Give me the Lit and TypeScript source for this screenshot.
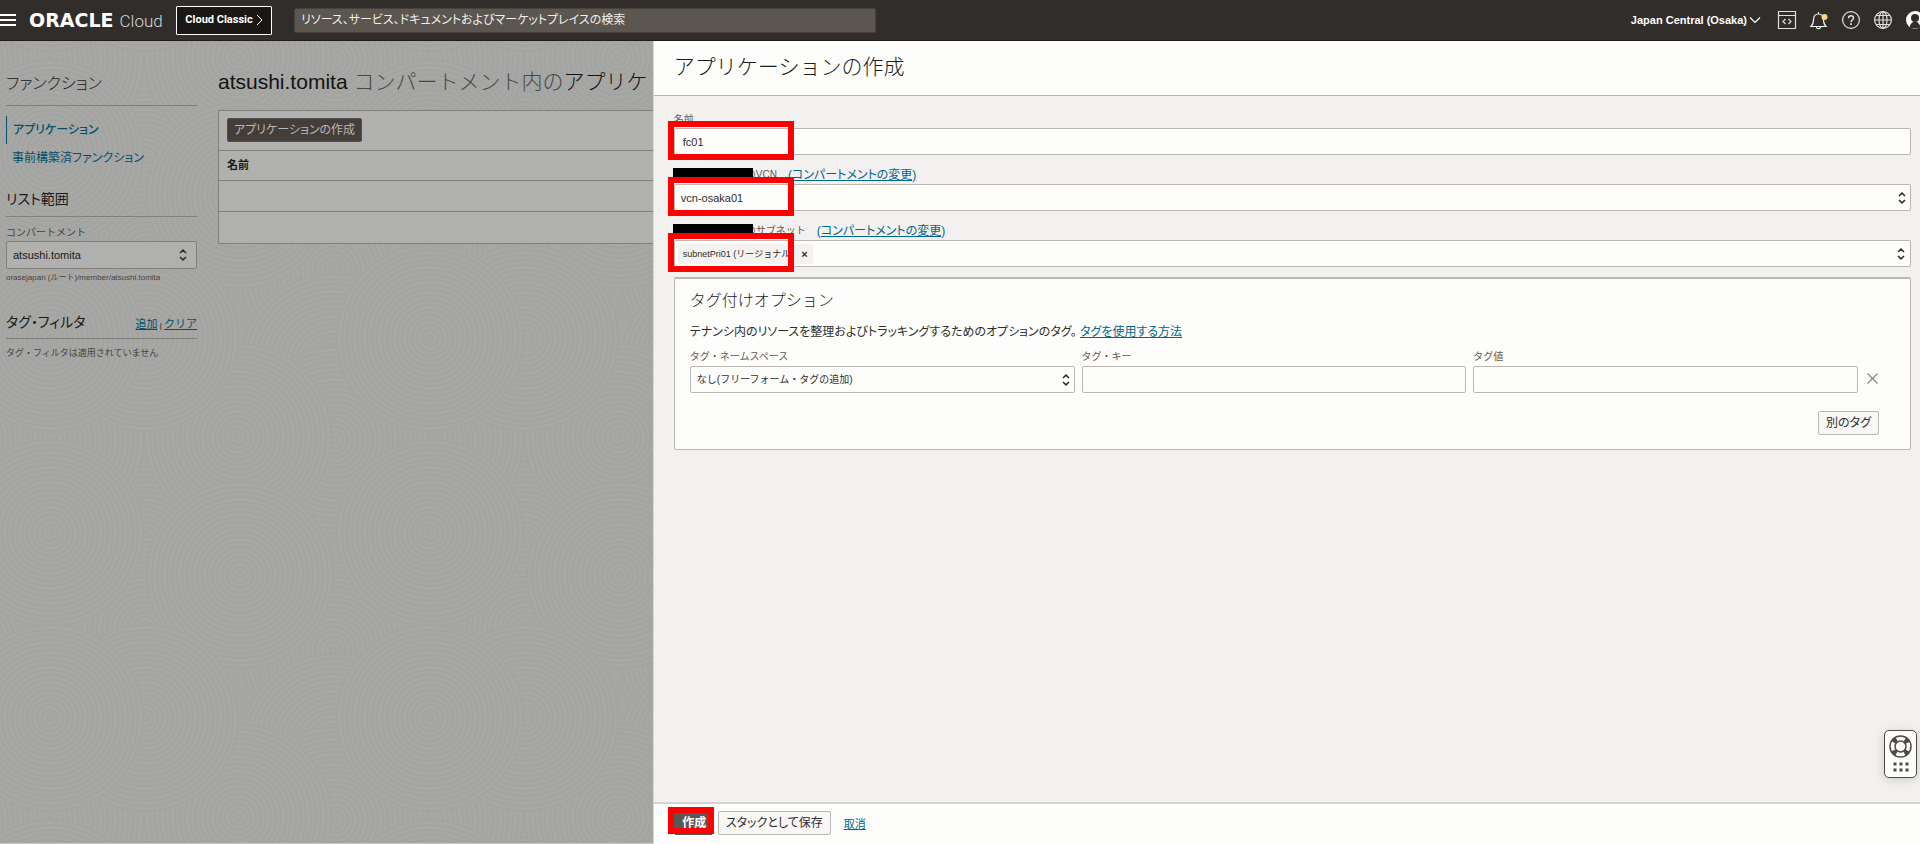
import { LitElement, html, svg, css } from "lit";
import { customElement, property } from "lit/decorators.js";

const SWIRLS = [
  [145, 160], [50, 60], [333, 270], [145, 250], [333, 367], [335, 60], [238, 57], [50, 153], [240, 195], [145, 338], [50, 338],
];
const RINGS = Array.from({ length: 19 }, (_, i) => 93 - i * 5);
const SHIFTS = [[0, 0], [-380, 0], [380, 0], [0, -380], [-380, -380], [380, -380], [0, 380]];

const updown = html`<svg class="updown" viewBox="0 0 8 12" width="8" height="12" aria-hidden="true">
  <path d="M1 4 L4 1.2 L7 4 M1 8 L4 10.8 L7 8" fill="none" stroke="#312d2a" stroke-width="1.6" />
</svg>`;

const shared = css`
  * { box-sizing: border-box; }
  button, input, select { font: inherit; color: inherit; margin: 0; }
  h1, h2, h3, p { margin: 0; font-weight: 400; }
  a { color: #00688c; }
  .updown { position: absolute; right: 5px; top: 50%; margin-top: -6px; pointer-events: none; }
  .pick { position: relative; display: block; }
  .pick select, .box {
    display: block; width: 100%; height: 27px; appearance: none; font-size: 11px;
    background: #fdfdfc; border: 1px solid #bdb7b2; border-radius: 2px; padding: 0 8px; outline: none;
  }
`;

@customElement("top-bar")
export class TopBar extends LitElement {
  static styles = [shared, css`
    :host {
      display: flex; align-items: center; height: 41px; background: #312d2a; color: #fff;
      border-bottom: 1px solid #1f1c1a; overflow: hidden; flex: none; box-sizing: border-box;
    }
    button { background: none; border: 0; padding: 0; display: flex; align-items: center; }
    .menu { margin-left: -2px; width: 18px; }
    .brand { display: flex; align-items: baseline; gap: 6px; margin-left: 13px; line-height: 24px; width: 135px; color: #fff; text-decoration: none; }
    .oracle { font: 700 19px/24px "DejaVu Sans", sans-serif; }
    .cloud { font: 300 17px/24px Roboto, sans-serif; color: #d8d5d2; }
    .classic {
      margin-left: 12px; height: 29px; width: 96px; justify-content: center; gap: 3px; border: 1px solid #fff;
      background: #1a1816; font: 700 11px/16px Roboto, sans-serif; border-radius: 1px;
    }
    .search {
      margin-left: 22px; width: 582px; height: 25px; background: #5b564f; border: 1px solid #47423d;
      border-radius: 2px; padding: 0 6px; font-size: 12px; font-feature-settings: "palt"; outline: none;
    }
    .search::placeholder { color: #f1efed; opacity: 1; }
    .region { margin-left: auto; font: 700 11px/16px "Liberation Sans", sans-serif; gap: 2px; }
    .tools { display: flex; align-items: center; gap: 12px; margin: 0 -5px 0 16px; }
    .tools svg { display: block; }
  `];
  render() {
    return html`
      <button class="menu" aria-label="メニュー">
        <svg width="18" height="14" viewBox="0 0 18 14"><path d="M0 2H18M0 7H18M0 12H18" stroke="#fff" stroke-width="2" /></svg>
      </button>
      <a class="brand" href="#"><span class="oracle">ORACLE</span><span class="cloud">Cloud</span></a>
      <button class="classic">Cloud Classic
        <svg width="7" height="12" viewBox="0 0 7 12"><path d="M1 1L6 6L1 11" fill="none" stroke="#fff" /></svg>
      </button>
      <input class="search" type="search" aria-label="検索" placeholder="リソース、サービス、ドキュメントおよびマーケットプレイスの検索" />
      <button class="region">Japan Central (Osaka)
        <svg width="12" height="8" viewBox="0 0 12 8"><path d="M1 1.500L6 6.500L11 1.500" fill="none" stroke="#fff" stroke-width="1.200" /></svg>
      </button>
      <div class="tools">
        <button aria-label="開発者ツール"><svg width="20" height="20" viewBox="0 0 20 20" fill="none" stroke="#e4e1dd" stroke-width="1.200">
          <path d="M1.500 1.500H18.500V18.500H1.500ZM1.500 5.500H18.500M8.500 9L6 11.500L8.500 14M11.500 9L14 11.500L11.500 14" /></svg></button>
        <button aria-label="通知"><svg width="20" height="20" viewBox="0 0 20 20" fill="none" stroke="#fff" stroke-width="1.200">
          <path d="M2 16.500H17C15 14.500 14.500 13 14.500 10C14.500 6 12.500 4 9.500 4C6.500 4 4.500 6 4.500 10C4.500 13 4 14.500 2 16.500ZM9.500 4V2M7.500 17C7.700 19.300 11.300 19.300 11.500 17" />
          <circle cx="15.500" cy="7" r="3" fill="#f9d78c" stroke="none" /></svg></button>
        <button aria-label="ヘルプ"><svg width="20" height="20" viewBox="0 0 20 20" fill="none" stroke="#e4e1dd" stroke-width="1.200">
          <circle cx="10" cy="10" r="8.400" /><path d="M7.500 8.200C7.500 4.800 12.500 5 12.500 8C12.500 10 10 10 10 12.200" stroke-width="1.500" /><path d="M10 13.200V15" stroke-width="1.700" /></svg></button>
        <button aria-label="言語"><svg width="20" height="20" viewBox="0 0 20 20" fill="none" stroke="#e4e1dd" stroke-width="1.200">
          <circle cx="10" cy="10" r="8.400" /><ellipse cx="10" cy="10" rx="4" ry="8.400" /><path d="M10 1.600V18.400M1.600 10H18.400M3 5.500H17M3 14.500H17" /></svg></button>
        <button aria-label="プロファイル"><svg width="20" height="20" viewBox="0 0 20 20">
          <circle cx="10" cy="10" r="9" fill="#fff" /><circle cx="10" cy="8" r="4" fill="#312d2a" /><path d="M4.500 17.200C5 14 7 13 8 12H12C13 13 15 14 15.500 17.200L13 18.600H7Z" fill="#312d2a" /></svg></button>
      </div>`;
  }
}

@customElement("function-page")
export class FunctionPage extends LitElement {
  static styles = [shared, css`
    :host { display: block; position: relative; height: 100%; background: #a6a6a5; color: #1a1918; overflow: hidden; box-sizing: border-box; border-bottom: 1px solid #c9c8c6; }
    .texture { position: absolute; inset: 0; width: 100%; height: 100%; }
    .columns { position: relative; display: grid; grid-template-columns: 191px minmax(0, 1fr); column-gap: 21px; padding: 27px 0 0 6px; }
    .side { font-size: 12px; line-height: 18px; padding-top: 1px; }
    a { color: #04506c; }
    .heading { border-bottom: 1px solid #827e7b; font-feature-settings: "palt"; }
    .first { font-size: 16px; line-height: 30px; padding-bottom: 6px; font-weight: 300; }
    .nav { display: flex; flex-direction: column; margin-top: 10px; font-feature-settings: "palt"; }
    .nav a { text-decoration: none; line-height: 28px; padding-left: 6px; }
    .nav .active { border-left: 1px solid #04506c; font-weight: 500; }
    .scope { font-size: 14px; line-height: 20px; margin-top: 17px; padding-bottom: 7px; }
    .label { display: block; font-size: 10px; line-height: 16px; color: #474442; margin-top: 8px; }
    .pick select { height: 28px; background: #b0b0ae; border-color: #827e7b; padding: 0 6px; }
    .pick .updown { right: 10px; }
    .path { font-size: 8px; line-height: 14px; color: #474442; margin-top: 2px; white-space: nowrap; }
    .filter { display: flex; justify-content: space-between; align-items: flex-end; margin-top: 25px; padding-bottom: 4px; }
    .filter h2 { font-size: 14px; line-height: 24px; }
    .filter a { font-size: 11px; font-feature-settings: normal; }
    .actions { font-size: 8px; line-height: 16px; }
    .none { font-size: 9px; line-height: 14px; color: #474442; margin-top: 7px; white-space: nowrap; }
    h1 { font-size: 21px; line-height: 28px; color: #4a4745; white-space: nowrap; font-weight: 300; overflow: hidden; }
    .strong { color: #141312; }
    .listing { margin-top: 14px; background: #b0b0ae; border: 1px solid #827e7b; border-right: 0; border-radius: 2px 0 0 2px; }
    .bar { display: flex; padding: 7px 8px 8px; }
    .create { height: 24px; border: 1px solid #55504d; border-radius: 2px; background: #443e3b; color: #b9b7b4; font-size: 12px; font-feature-settings: "palt"; padding: 0 6px; line-height: 20px; }
    table { width: 100%; border-collapse: collapse; }
    th { text-align: left; font-size: 11px; line-height: 16px; font-weight: 700; padding: 6px 8px 7px; border-top: 1px solid #827e7b; }
    td { height: 31px; border-top: 1px solid #827e7b; padding: 0; }
  `];
  render() {
    return html`
      <svg class="texture" aria-hidden="true">
        <defs>
          <pattern id="swirl" width="380" height="380" patternUnits="userSpaceOnUse" patternTransform="translate(0 339)">
            <rect width="380" height="380" fill="#a6a6a4" />
            ${SWIRLS.map(([x, y]) => SHIFTS.map(([dx, dy]) => svg`<g fill="#a7a7a5" stroke="#a3a3a2" stroke-width="2">
              ${RINGS.map((r) => svg`<circle cx=${x + dx} cy=${y + dy} r=${r} />`)}</g>`))}
          </pattern>
        </defs>
        <rect width="100%" height="100%" fill="url(#swirl)" />
      </svg>
      <div class="columns">
        <aside class="side">
          <h2 class="heading first">ファンクション</h2>
          <nav class="nav">
            <a class="active" href="#">アプリケーション</a>
            <a href="#">事前構築済ファンクション</a>
          </nav>
          <h2 class="heading scope">リスト範囲</h2>
          <label class="label" for="scope">コンパートメント</label>
          <span class="pick"><select id="scope"><option>atsushi.tomita</option></select>${updown}</span>
          <p class="path">orasejapan (ルート)/member/atsushi.tomita</p>
          <div class="heading filter"><h2>タグ・フィルタ</h2><span class="actions"><a href="#">追加</a> | <a href="#">クリア</a></span></div>
          <p class="none">タグ・フィルタは適用されていません</p>
        </aside>
        <main>
          <h1><span class="strong">atsushi.tomita</span> コンパートメント内の<span class="strong">アプリケ</span></h1>
          <section class="listing">
            <div class="bar"><button class="create">アプリケーションの作成</button></div>
            <table>
              <thead><tr><th>名前</th></tr></thead>
              <tbody><tr><td></td></tr><tr><td></td></tr></tbody>
            </table>
          </section>
        </main>
      </div>`;
  }
}

@customElement("create-panel")
export class CreatePanel extends LitElement {
  @property() heading = "アプリケーションの作成";

  static styles = [shared, css`
    :host { display: flex; flex-direction: column; background: #f3f1f0; color: #312d2a; border-left: 1px solid #d9d6d3; }
    header { background: #fdfdfc; border-bottom: 1px solid #b9b5b2; padding: 12px 20px 14px; }
    h1 { font-size: 21px; line-height: 28px; color: #1f1c1a; font-weight: 300; }
    .body { flex: 1; padding: 16px 9px 0 20px; }
    .field { position: relative; }
    .label { display: flex; align-items: center; font-size: 10px; line-height: 16px; color: #5f5a56; }
    .label.tall { height: 29px; padding-top: 10px; }
    .label a { margin-left: 11px; font-size: 12px; font-feature-settings: "palt"; }
    .mask { position: relative; z-index: 1; width: 80px; height: 13px; background: #000; margin: 0 -7px 0 -1px; }
    .mark { position: absolute; left: -6px; bottom: -5px; width: 126px; height: 39px; border: 6px solid #f00; pointer-events: none; z-index: 2; }
    .pick select { padding: 0 6px; }
    .multi { position: relative; display: flex; align-items: center; padding: 0 3px; }
    .chip { display: flex; align-items: center; height: 20px; background: #f3f2f0; font-size: 9px; padding: 0 5px; gap: 8px; border-radius: 2px; }
    .chip button { border: 0; background: none; padding: 0; font: 700 11px/12px "Liberation Sans", sans-serif; }
    .tags { margin-top: 10px; background: #fdfdfc; border: 1px solid #bdb7b2; border-top-width: 2px; border-radius: 2px; padding: 9px 31px 14px 15px; }
    h2 { font-size: 16px; line-height: 26px; font-weight: 300; color: #1f1c1a; }
    .hint { font-size: 12px; line-height: 18px; margin-top: 9px; font-feature-settings: "palt"; }
    .row { display: grid; grid-template-columns: 1fr 1fr 1fr 14px; column-gap: 7px; align-items: end; margin-top: 8px; }
    .row .box, .row select { font-size: 10px; padding: 0 6px; }
    .row .label { margin-bottom: 1px; }
    .drop { border: 0; background: none; padding: 0 0 9px 2px; display: flex; }
    .more { display: flex; justify-content: flex-end; margin-top: 18px; }
    .btn { height: 24px; border: 1px solid #bdb7b2; border-radius: 2px; background: #f8f7f6; font-size: 12px; font-feature-settings: "palt"; padding: 0 7px; line-height: 20px; }
    footer { display: flex; align-items: center; gap: 5px; height: 42px; border-top: 2px solid #d6d2cf; background: #fdfdfc; padding: 0 20px 2px; font-size: 11px; }
    .submit { position: relative; display: flex; }
    .primary { width: 39px; background: #5b5652; color: #fff; border-color: #5b5652; font-weight: 700; padding: 0 0 0 2px; }
    .submit .mark { width: 46px; height: 27px; bottom: 1px; }
    footer a { margin-left: 8px; }
  `];
  render() {
    return html`
      <header><h1>${this.heading}</h1></header>
      <div class="body">
        <div class="field">
          <label class="label" for="name">名前</label>
          <input class="box" id="name" value="fc01" />
          <span class="mark"></span>
        </div>
        <div class="field">
          <div class="label tall"><span class="mask"></span><label for="vcn">のVCN</label><a href="#">(コンパートメントの変更)</a></div>
          <span class="pick"><select id="vcn"><option>vcn-osaka01</option></select>${updown}</span>
          <span class="mark"></span>
        </div>
        <div class="field">
          <div class="label tall"><span class="mask"></span><span id="subnet">のサブネット</span><a href="#">(コンパートメントの変更)</a></div>
          <div class="box multi" role="group" aria-labelledby="subnet">
            <span class="chip">subnetPri01 (リージョナル)<button aria-label="削除">×</button></span>${updown}
          </div>
          <span class="mark"></span>
        </div>
        <section class="tags">
          <h2>タグ付けオプション</h2>
          <p class="hint">テナンシ内のリソースを整理およびトラッキングするためのオプションのタグ。 <a href="#">タグを使用する方法</a></p>
          <div class="row">
            <div><label class="label" for="ns">タグ・ネームスペース</label>
              <span class="pick"><select id="ns"><option>なし(フリーフォーム・タグの追加)</option></select>${updown}</span></div>
            <div><label class="label" for="key">タグ・キー</label><input class="box" id="key" /></div>
            <div><label class="label" for="val">タグ値</label><input class="box" id="val" /></div>
            <button class="drop" aria-label="タグの削除"><svg width="11" height="11" viewBox="0 0 11 11"><path d="M.5 .5L10.500 10.500M10.500 .5L.5 10.500" stroke="#8b8580" stroke-width="1.300" /></svg></button>
          </div>
          <div class="more"><button class="btn">別のタグ</button></div>
        </section>
      </div>
      <footer>
        <span class="submit"><button class="btn primary">作成</button><span class="mark"></span></span>
        <button class="btn">スタックとして保存</button>
        <a href="#">取消</a>
      </footer>`;
  }
}

@customElement("app-root")
export class AppRoot extends LitElement {
  static styles = css`
    :host { display: flex; flex-direction: column; height: 100vh; overflow: hidden; font-family: "Liberation Sans", "Noto Sans CJK JP", sans-serif; }
    .stage { position: relative; flex: 1; min-height: 0; display: grid; grid-template-columns: 34fr 66fr; grid-template-rows: minmax(0, 1fr); }
    .assist {
      position: absolute; right: 3px; bottom: 66px; width: 33px; height: 48px; padding: 0; display: flex; justify-content: center;
      background: #fdfdfc; border: 1px solid #4f4a46; border-radius: 5px; box-shadow: 0 2px 10px rgba(0, 0, 0, 0.16);
    }
  `;
  render() {
    return html`
      <top-bar></top-bar>
      <div class="stage">
        <function-page></function-page>
        <create-panel></create-panel>
        <button class="assist" aria-label="サポート">
          <svg width="31" height="46" viewBox="0 0 31 46" fill="none" stroke="#4f4a46">
            <circle cx="15.500" cy="15.500" r="8.500" stroke-width="5" stroke-dasharray="4.500 8.850" stroke-dashoffset="-4.430" />
            <circle cx="15.500" cy="15.500" r="10.500" stroke-width="1.500" /><circle cx="15.500" cy="15.500" r="5.500" stroke-width="1.500" />
            ${[8.5, 14.5, 20.5].map((x) => [31.5, 37.5].map((y) => svg`<rect x=${x} y=${y} width="3" height="3" fill="#4f4a46" stroke="none" />`))}
          </svg>
        </button>
      </div>`;
  }
}
